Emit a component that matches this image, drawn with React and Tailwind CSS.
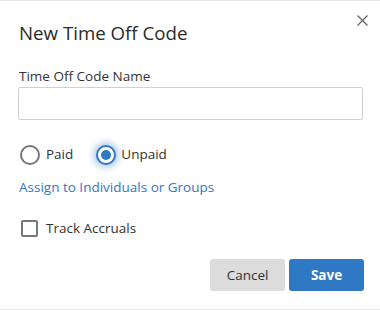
import React from 'react';

const App = () => {
  return (
    <div
      className="w-[380px] h-[310px] bg-white border-t border-b border-[#e6e6e6] relative text-[#333]"
      style={{ fontFamily: '"Open Sans", "Noto Sans", sans-serif' }}
    >
      <button className="absolute right-[12px] top-[14px] w-[11px] h-[11px] flex items-center justify-center text-[#666]">
        <svg width="11" height="11" viewBox="0 0 11 11">
          <path d="M0.5 0.5 L10.5 10.5 M10.5 0.5 L0.5 10.5" stroke="currentColor" strokeWidth="1.3" />
        </svg>
      </button>
      <div className="px-[18px] pt-[19px] text-[13.5px]">
        <h2 className="text-[18.7px] leading-[26px] text-[#2b2b2b] ml-[1px]">New Time Off Code</h2>
        <label className="block mt-[21px] leading-[18px] ml-[1px]">Time Off Code Name</label>
        <input className="block mt-[2px] w-[345px] h-[33px] border border-[#d0d0d0] rounded-[2px] outline-none px-2" />
        <div className="flex items-center mt-[25px] h-[19px]">
          <label className="flex items-center ml-[2px]">
            <span className="w-[20px] h-[20px] rounded-full border-2 border-[#777] bg-white" />
            <span className="ml-[6px]">Paid</span>
          </label>
          <label className="flex items-center ml-[23px]">
            <span className="w-[20px] h-[20px] rounded-full border-2 border-[#2f78c4] bg-white flex items-center justify-center shadow-[0_0_6px_3px_rgba(47,120,196,0.35)]">
              <span className="w-[10px] h-[10px] rounded-full bg-[#2f78c4]" />
            </span>
            <span className="ml-[5px]">Unpaid</span>
          </label>
        </div>
        <a className="block mt-[14px] leading-[18px] text-[#2f78c4] ml-[1px]">Assign to Individuals or Groups</a>
        <label className="flex items-center mt-[23px] h-[18px] ml-[3px]">
          <span className="w-[17px] h-[17px] border-2 border-[#777] rounded-[2px] bg-white" />
          <span className="ml-[8px]">Track Accruals</span>
        </label>
        <div className="flex justify-end gap-[4px] mt-[22px] mr-[-2px]">
          <button className="w-[75px] h-[32px] rounded-[3px] bg-[#dcdcdc] text-[#333]">Cancel</button>
          <button className="w-[75px] h-[32px] rounded-[3px] bg-[#2f78c4] font-bold text-white">Save</button>
        </div>
      </div>
    </div>
  );
};

export default App;
